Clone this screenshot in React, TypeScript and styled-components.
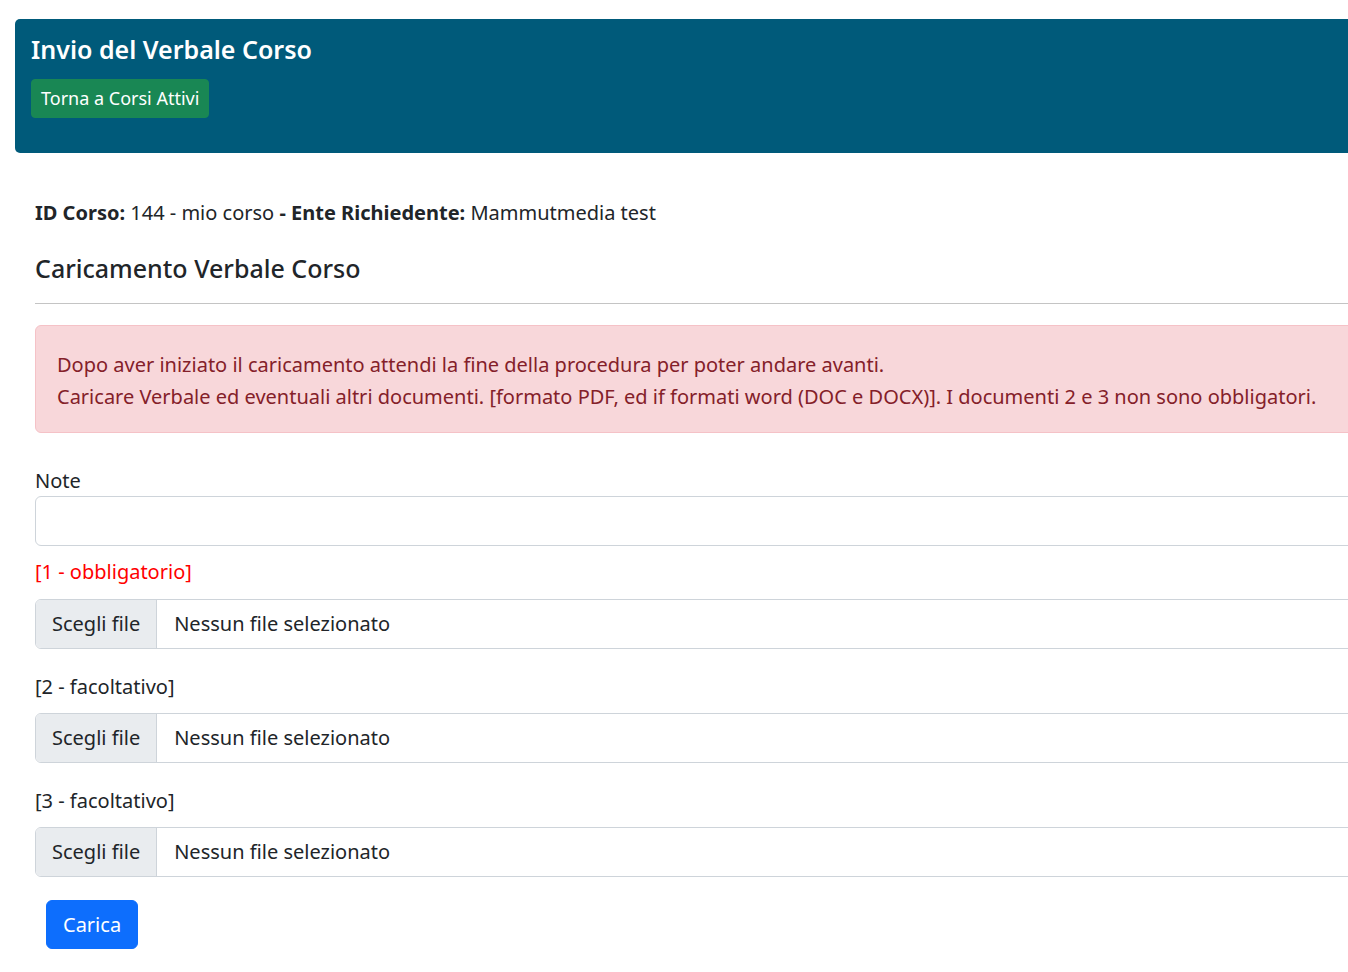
import React from 'react';
import styled, { createGlobalStyle } from 'styled-components';

const GlobalStyle = createGlobalStyle`
  html, body {
    margin: 0;
    padding: 0;
    overflow: hidden;
    background: #fff;
  }
  body {
    font-family: 'Noto Sans', 'Open Sans', sans-serif;
    color: #212529;
  }
`;

const Page = styled.div`
  width: 1420px;
  padding: 19px 0 30px 15px;
`;

const Header = styled.div`
  background-color: #005a7a;
  border-radius: 5px 0 0 5px;
  padding: 14px 16px 35px;
`;

const HeaderTitle = styled.h1`
  margin: 0 0 14px;
  color: #fff;
  font-size: 25px;
  font-weight: 600;
  line-height: 32px;
`;

const Button = styled.button<{ $variant: 'success' | 'primary' }>`
  display: inline-block;
  border: 1px solid ${p => (p.$variant === 'success' ? '#198754' : '#0d6efd')};
  background-color: ${p => (p.$variant === 'success' ? '#198754' : '#0d6efd')};
  color: #fff;
  font-family: inherit;
  font-size: ${p => (p.$variant === 'success' ? '18px' : '20px')};
  line-height: ${p => (p.$variant === 'success' ? '27px' : '30px')};
  padding: ${p => (p.$variant === 'success' ? '5px 9px' : '8.5px 16px')};
  border-radius: ${p => (p.$variant === 'success' ? '4px' : '6px')};
  cursor: pointer;
`;

const Content = styled.div`
  padding: 45px 0 0 20px;
  font-size: 20px;
  line-height: 30px;
`;

const InfoLine = styled.p`
  margin: 0 0 24px;
  b {
    font-weight: 700;
  }
`;

const SectionTitle = styled.h4`
  margin: 0;
  font-size: 25px;
  font-weight: 500;
  line-height: 32px;
`;

const Divider = styled.hr`
  margin: 19px 0 21px;
  border: 0;
  border-top: 1px solid #c4c4c4;
`;

const Alert = styled.div`
  background-color: #f8d7da;
  border: 1px solid #f5c2c7;
  color: #842029;
  border-radius: 6px;
  padding: 23px 21px 19px;
  line-height: 32px;
  margin-bottom: 33px;
`;

const FieldLabel = styled.label<{ $required?: boolean }>`
  display: block;
  color: ${p => (p.$required ? '#ff0000' : '#212529')};
  margin: ${p => (p.$required ? '11px 0 12px' : '0')};
`;

const FileLabel = styled.label`
  display: block;
  margin: 23px 0 11px;
`;

const TextInput = styled.input`
  display: block;
  box-sizing: border-box;
  width: 100%;
  height: 50px;
  border: 1px solid #ced4da;
  border-radius: 6px;
  font-family: inherit;
  font-size: 20px;
  padding: 8px 16px;
`;

const FileBox = styled.div`
  display: flex;
  height: 50px;
  box-sizing: border-box;
  border: 1px solid #ced4da;
  border-radius: 6px;
  overflow: hidden;
  align-items: stretch;
`;

const FileButton = styled.span`
  display: flex;
  align-items: center;
  padding: 0 16px;
  background-color: #e9ecef;
  border-right: 1px solid #ced4da;
`;

const FileName = styled.span`
  display: flex;
  align-items: center;
  padding-left: 17px;
`;

const SubmitRow = styled.div`
  padding: 23px 0 0 11px;
`;

const files = [
  { label: '[1 - obbligatorio]', required: true },
  { label: '[2 - facoltativo]', required: false },
  { label: '[3 - facoltativo]', required: false },
];

const FileField: React.FC<{ label: string; required: boolean }> = ({ label, required }) => (
  <>
    {required ? (
      <FieldLabel $required>{label}</FieldLabel>
    ) : (
      <FileLabel>{label}</FileLabel>
    )}
    <FileBox>
      <FileButton>Scegli file</FileButton>
      <FileName>Nessun file selezionato</FileName>
    </FileBox>
  </>
);

export default function App() {
  return (
    <>
      <GlobalStyle />
      <Page>
        <Header>
          <HeaderTitle>Invio del Verbale Corso</HeaderTitle>
          <Button $variant="success">Torna a Corsi Attivi</Button>
        </Header>

        <Content>
          <InfoLine>
            <b>ID Corso:</b> 144 - mio corso <b>- Ente Richiedente:</b> Mammutmedia test
          </InfoLine>
          <SectionTitle>Caricamento Verbale Corso</SectionTitle>
          <Divider />

          <Alert>
            Dopo aver iniziato il caricamento attendi la fine della procedura per poter andare avanti.
            <br />
            Caricare Verbale ed eventuali altri documenti. [formato PDF, ed if formati word (DOC e DOCX)]. I documenti 2 e 3 non sono obbligatori.
          </Alert>

          <FieldLabel>Note</FieldLabel>
          <TextInput type="text" />

          {files.map(f => (
            <FileField key={f.label} label={f.label} required={f.required} />
          ))}

          <SubmitRow>
            <Button $variant="primary">Carica</Button>
          </SubmitRow>
        </Content>
      </Page>
    </>
  );
}
